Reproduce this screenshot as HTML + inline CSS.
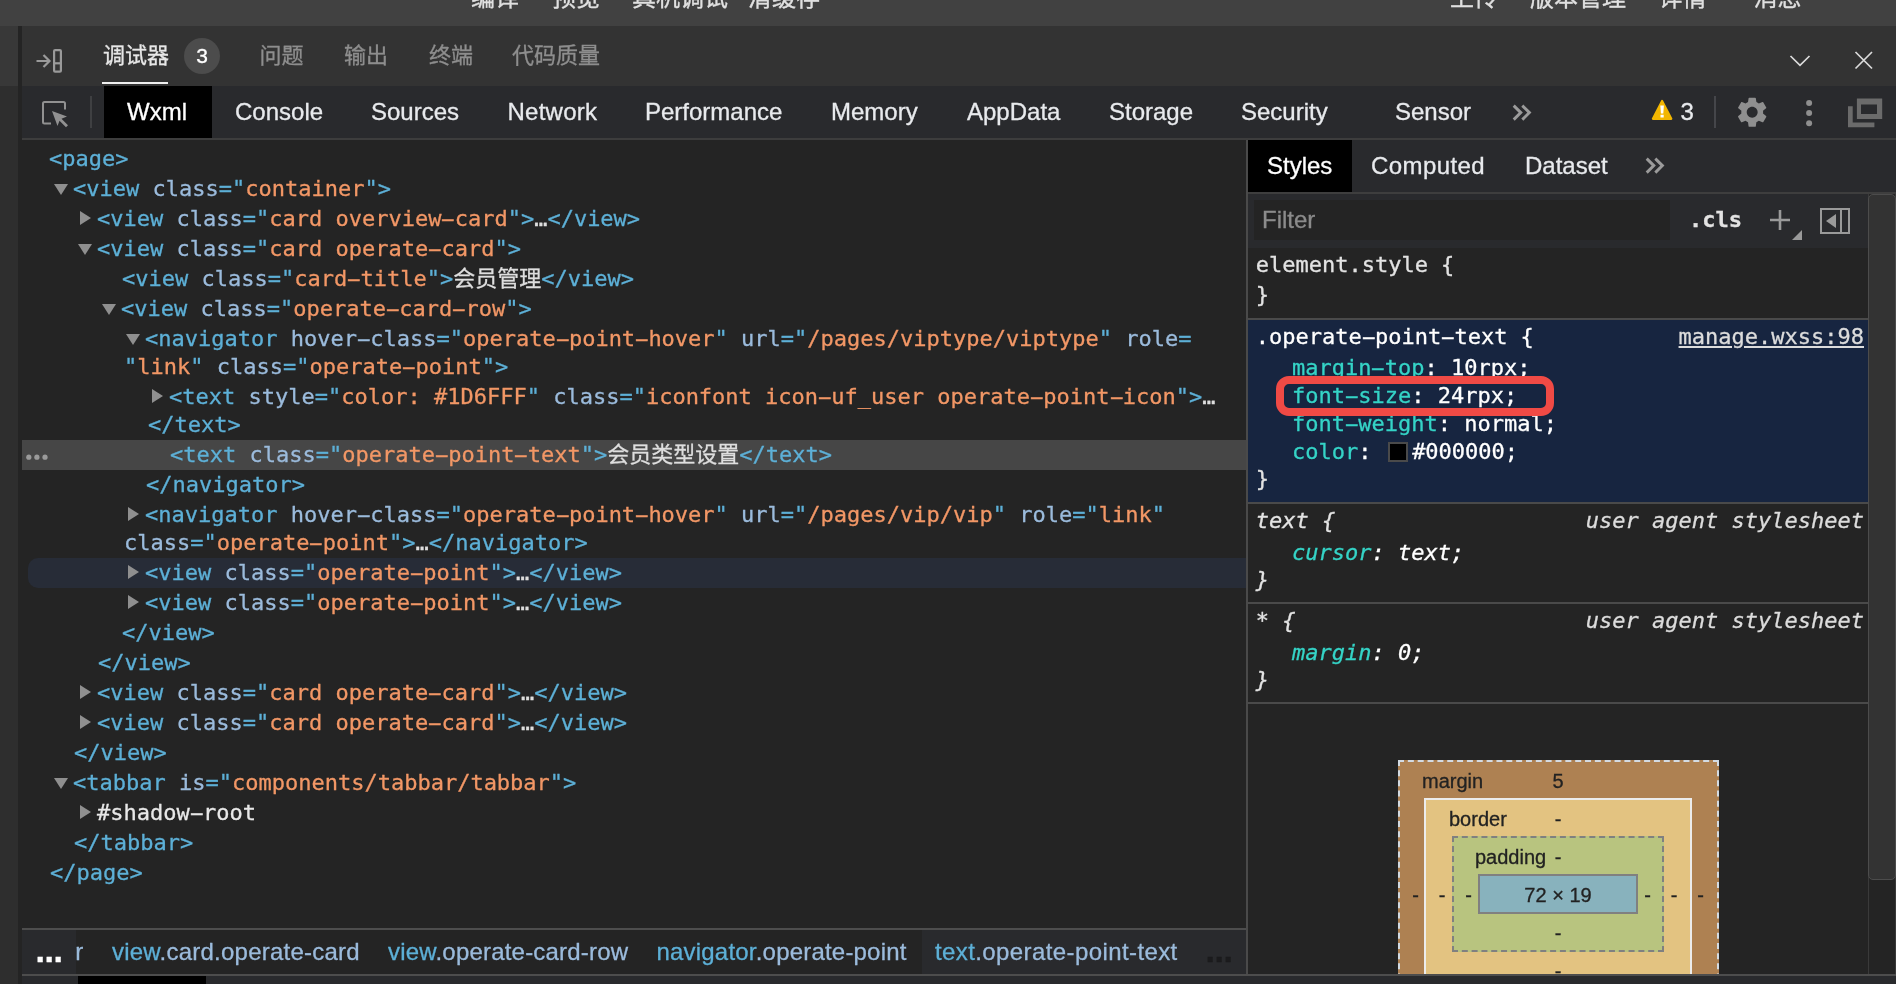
<!DOCTYPE html>
<html lang="zh-CN">
<head>
<meta charset="utf-8">
<title>调试器 - Wxml</title>
<style>
html,body{margin:0;padding:0;}
body{width:1896px;height:984px;overflow:hidden;background:#333333;position:relative;
  font-family:"Liberation Sans","Noto Sans CJK SC",sans-serif;color:#e8eaed;}
#wrap{position:absolute;left:0;top:0;width:1896px;height:984px;overflow:hidden;will-change:transform;-webkit-text-stroke:0.3px;}
.abs{position:absolute;}
/* top app toolbar (clipped) */
#topbar{left:0;top:0;width:1896px;height:26px;background:#414141;overflow:hidden;}
#topbar span{position:absolute;top:-18px;font-size:24px;line-height:32px;color:#e0e0e0;white-space:nowrap;}
/* left strips */
#lstrip1{left:0;top:26px;width:18px;height:60px;background:#383838;}
#lstrip2{left:0;top:86px;width:18px;height:898px;background:#2e2e2e;}
#lstrip3{left:18px;top:26px;width:4px;height:958px;background:#242424;}
/* panel tab row */
#ptabs{left:22px;top:26px;width:1874px;height:60px;background:#333333;}
#ptabs span.t{position:absolute;top:14px;font-size:22px;line-height:32px;color:#8e8e8e;white-space:nowrap;}
#ptabs span.t.on{color:#e7e7e7;}
/* devtools toolbar */
#dtbar{left:22px;top:86px;width:1874px;height:52px;background:#292a2d;}
#dtbar .tab{position:absolute;top:0;height:52px;line-height:51px;font-size:24px;color:#e8eaed;white-space:nowrap;}
#dtline{left:22px;top:138px;width:1874px;height:2px;background:#3d3d3d;}
/* tree */
#tree{left:22px;top:140px;width:1224px;height:790px;background:#242424;overflow:hidden;}
.mono{font-family:"DejaVu Sans Mono","Liberation Mono","Noto Sans CJK SC",monospace;font-size:22px;}
.sr{color:#e8e8e8;}
.h{display:inline-block;font-style:inherit;transform:scaleX(2);}
.ln{position:absolute;left:0;white-space:pre;line-height:28px;height:28px;}
.tg{color:#5db0d7;}
.an{color:#9bbbdc;}
.av{color:#f29766;}
.tx{color:#dedede;}
.ar{position:absolute;width:0;height:0;}

/* breadcrumbs */
#crumbs{left:22px;top:928px;width:1224px;height:46px;background:#242424;border-top:2px solid #4d4d4d;box-sizing:border-box;overflow:hidden;}
#crumbs .c{position:absolute;top:0;height:44px;line-height:43px;font-size:24px;white-space:nowrap;color:#9bbbdc;}
#crumbs .c b{font-weight:normal;color:#5db0d7;}
#botline{left:22px;top:974px;width:1874px;height:2px;background:#4d4d4d;}
#botbar{left:22px;top:976px;width:1874px;height:8px;background:#292a2d;}
/* right pane */
#vdiv{left:1246px;top:140px;width:2px;height:834px;background:#4a4a4a;}
#rtabs{left:1248px;top:140px;width:648px;height:52px;background:#292a2d;}
#rtabs .tab{position:absolute;top:0;height:52px;line-height:51px;font-size:24px;color:#e8eaed;white-space:nowrap;}
#rline{left:1248px;top:192px;width:648px;height:2px;background:#3e3e3e;}
#filter{left:1248px;top:194px;width:620px;height:54px;background:#292a2d;}
#styles{left:1248px;top:248px;width:620px;height:726px;background:#242424;overflow:hidden;}
#styles .sl{position:absolute;white-space:pre;line-height:28px;height:28px;color:#e3e3e3;}
.pn{color:#35d4c7;}
.sep{position:absolute;left:0;width:620px;height:2px;background:#4a4a4a;}
#sbar{left:1868px;top:194px;width:28px;height:780px;background:#242424;box-sizing:border-box;border-left:1px solid #3a3a3a;border-right:1px solid #3a3a3a;}
#sthumb{left:1868px;top:194px;width:28px;height:685.6px;background:#333333;box-sizing:border-box;border:1.5px solid #4c4c4c;border-radius:5px;}
/* box model */
.bm{position:absolute;box-sizing:border-box;}
.bml{position:absolute;font-family:"Liberation Sans",sans-serif;font-size:20px;line-height:24px;color:#222;white-space:nowrap;}
</style>
</head>
<body>
<div id="wrap">
<div id="topbar" class="abs">
  <span style="left:471px">编译</span>
  <span style="left:552px">预览</span>
  <span style="left:632px">真机调试</span>
  <span style="left:748px">清缓存</span>
  <span style="left:1450px">上传</span>
  <span style="left:1530px">版本管理</span>
  <span style="left:1658.5px">详情</span>
  <span style="left:1753.5px">消息</span>
</div>
<div id="lstrip1" class="abs"></div>
<div id="lstrip2" class="abs"></div>
<div id="lstrip3" class="abs"></div>

<div id="ptabs" class="abs">
  <span class="t on" style="left:81px">调试器</span>
  <span class="t" style="left:237.5px">问题</span>
  <span class="t" style="left:322px">输出</span>
  <span class="t" style="left:407px">终端</span>
  <span class="t" style="left:490px">代码质量</span>
  <svg class="abs" style="left:12px;top:20px" width="32" height="30" viewBox="0 0 32 30">
    <path d="M2.5 15 H15 M9.5 9 L15.5 15 L9.5 21" fill="none" stroke="#9a9a9a" stroke-width="2.2"/>
    <rect x="20.1" y="4.1" width="6.8" height="21.6" rx="1" fill="none" stroke="#9a9a9a" stroke-width="2.2"/>
    <path d="M20 17.3 H27" stroke="#9a9a9a" stroke-width="2.2"/>
  </svg>
  <div class="abs" style="left:80px;top:55.5px;width:66px;height:2.5px;background:#f0f0f0"></div>
  <div class="abs" style="left:162px;top:12px;width:36px;height:36px;border-radius:18px;background:#4c4c4c"></div>
  <span class="abs" style="left:162px;top:12px;width:36px;text-align:center;font-size:21px;line-height:36px;color:#fff">3</span>
  <svg class="abs" style="left:1764px;top:26px" width="28" height="18" viewBox="0 0 28 18"><path d="M4.5 4 L14 13.3 L23.5 4" fill="none" stroke="#dcdcdc" stroke-width="1.7"/></svg>
  <svg class="abs" style="left:1830px;top:22px" width="24" height="24" viewBox="0 0 24 24"><path d="M3.5 4 L20 20.5 M20 4 L3.5 20.5" fill="none" stroke="#dcdcdc" stroke-width="1.7"/></svg>
</div>

<div id="dtbar" class="abs">
  <svg class="abs" style="left:19px;top:12.5px" width="30" height="30" viewBox="0 0 30 30">
    <path d="M10 24.5 H3.5 a1.5 1.5 0 0 1 -1.5 -1.5 V4.5 a1.5 1.5 0 0 1 1.5 -1.5 H22.5 a1.5 1.5 0 0 1 1.5 1.5 V10.5" fill="none" stroke="#919191" stroke-width="2"/>
    <path d="M11 12 L26 17.5 L20.5 19.8 L27 26.3 L25 28.3 L18.5 21.8 L16.5 27 Z" fill="#919191"/>
  </svg>
  <div class="abs" style="left:68px;top:10px;width:2px;height:32px;background:#3f4042"></div>
  <div class="abs" style="left:82px;top:0;width:108px;height:52px;background:#000"></div>
  <span class="tab" style="left:105px;color:#fff">Wxml</span>
  <span class="tab" style="left:213px">Console</span>
  <span class="tab" style="left:349px">Sources</span>
  <span class="tab" style="left:485.5px;letter-spacing:0.25px">Network</span>
  <span class="tab" style="left:623px">Performance</span>
  <span class="tab" style="left:809px">Memory</span>
  <span class="tab" style="left:945px">AppData</span>
  <span class="tab" style="left:1087px">Storage</span>
  <span class="tab" style="left:1219px">Security</span>
  <span class="tab" style="left:1373px">Sensor</span>
  <svg class="abs" style="left:1489.6px;top:17.6px" width="20" height="18" viewBox="0 0 20 18"><path d="M1.7 1.6 L8.8 8.6 L1.7 15.6 M10.3 1.6 L17.4 8.6 L10.3 15.6" fill="none" stroke="#9b9b9b" stroke-width="2.9"/></svg>
  <svg class="abs" style="left:1628px;top:12px" width="24" height="24" viewBox="0 0 24 24">
    <path d="M12.1 3 L21.3 20.8 H2.9 Z" fill="#f2b600" stroke="#f2b600" stroke-width="2.2" stroke-linejoin="round"/>
    <path d="M10.3 7.6 H13.9 L13.3 15.4 H10.9 Z M10.5 16.8 H13.7 V19.4 H10.5 Z" fill="#fff"/>
  </svg>
  <span class="tab" style="left:1658.5px">3</span>
  <div class="abs" style="left:1692px;top:10px;width:2px;height:32px;background:#45464a"></div>
  <svg class="abs" style="left:1711.8px;top:7.8px" width="36.4" height="36.4" viewBox="0 0 24 24"><path fill="#8f8f8f" d="M19.14,12.94c0.04-0.3,0.06-0.61,0.06-0.94c0-0.32-0.02-0.64-0.07-0.94l2.03-1.58c0.18-0.14,0.23-0.41,0.12-0.61 l-1.92-3.32c-0.12-0.22-0.37-0.29-0.59-0.22l-2.39,0.96c-0.5-0.38-1.03-0.7-1.62-0.94L14.4,2.81c-0.04-0.24-0.24-0.41-0.48-0.41 h-3.84c-0.24,0-0.43,0.17-0.47,0.41L9.25,5.35C8.66,5.59,8.12,5.92,7.63,6.29L5.24,5.33c-0.22-0.08-0.47,0-0.59,0.22L2.74,8.87 C2.62,9.08,2.66,9.34,2.86,9.48l2.03,1.58C4.84,11.36,4.8,11.69,4.8,12s0.02,0.64,0.07,0.94l-2.03,1.58 c-0.18,0.14-0.23,0.41-0.12,0.61l1.92,3.32c0.12,0.22,0.37,0.29,0.59,0.22l2.39-0.96c0.5,0.38,1.03,0.7,1.62,0.94l0.36,2.54 c0.05,0.24,0.24,0.41,0.48,0.41h3.84c0.24,0,0.44-0.17,0.47-0.41l0.36-2.54c0.59-0.24,1.13-0.56,1.62-0.94l2.39,0.96 c0.22,0.08,0.47,0,0.59-0.22l1.92-3.32c0.12-0.22,0.07-0.47-0.12-0.61L19.14,12.94z M12,15.6c-1.98,0-3.6-1.62-3.6-3.6 s1.62-3.6,3.6-3.6s3.6,1.62,3.6,3.6S13.98,15.6,12,15.6z"/></svg>
  <svg class="abs" style="left:1782px;top:12px" width="10" height="30" viewBox="0 0 10 30"><circle cx="5.1" cy="5" r="3" fill="#8f8f8f"/><circle cx="5.1" cy="15" r="3" fill="#8f8f8f"/><circle cx="5.1" cy="25.2" r="3" fill="#8f8f8f"/></svg>
  <svg class="abs" style="left:1824px;top:10px" width="40" height="34" viewBox="0 0 40 34">
    <path d="M2 10.2 H6.7 V26.6 H28.4 V31.3 H2 Z" fill="#6b6b6b"/>
    <path d="M10.9 2.5 H36.2 V23 H10.9 Z M15 8.4 V18 H31 V8.4 Z" fill="#6b6b6b" fill-rule="evenodd"/>
  </svg>
</div>
<div id="dtline" class="abs"></div>
<div id="tree" class="abs mono">
<div class="abs" style="left:0;top:300px;width:1224px;height:30px;background:#464646"></div>
<div class="abs" style="left:6px;top:418px;width:1218px;height:30px;background:#272c37;border-radius:10px 0 0 10px"></div>
<svg class="abs" style="left:3px;top:312px" width="24" height="10" viewBox="0 0 24 10"><circle cx="3.8" cy="5.2" r="2.6" fill="#9a9a9a"/><circle cx="11.9" cy="5.2" r="2.6" fill="#9a9a9a"/><circle cx="20" cy="5.2" r="2.6" fill="#9a9a9a"/></svg>
<div class="ln" style="left:27px;top:5px"><span class="tg">&lt;page&gt;</span></div>
<i class="ar" style="left:31.5px;top:44.0px;border-left:7.4px solid transparent;border-right:7.4px solid transparent;border-top:11px solid #8f8f8f"></i>
<div class="ln" style="left:51px;top:35px"><span class="tg">&lt;view</span> <span class="an">class</span><span class="tg">="</span><span class="av">container</span><span class="tg">"</span><span class="tg">&gt;</span></div>
<i class="ar" style="left:58.0px;top:70.7px;border-top:7.3px solid transparent;border-bottom:7.3px solid transparent;border-left:11px solid #8f8f8f"></i>
<div class="ln" style="left:75px;top:65px"><span class="tg">&lt;view</span> <span class="an">class</span><span class="tg">="</span><span class="av">card overview<i class="h">-</i>card</span><span class="tg">"</span><span class="tg">&gt;</span><span class="tx">…</span><span class="tg">&lt;/view&gt;</span></div>
<i class="ar" style="left:55.5px;top:104.0px;border-left:7.4px solid transparent;border-right:7.4px solid transparent;border-top:11px solid #8f8f8f"></i>
<div class="ln" style="left:75px;top:95px"><span class="tg">&lt;view</span> <span class="an">class</span><span class="tg">="</span><span class="av">card operate<i class="h">-</i>card</span><span class="tg">"</span><span class="tg">&gt;</span></div>
<div class="ln" style="left:100px;top:125px"><span class="tg">&lt;view</span> <span class="an">class</span><span class="tg">="</span><span class="av">card<i class="h">-</i>title</span><span class="tg">"</span><span class="tg">&gt;</span><span class="tx">会员管理</span><span class="tg">&lt;/view&gt;</span></div>
<i class="ar" style="left:79.5px;top:164.0px;border-left:7.4px solid transparent;border-right:7.4px solid transparent;border-top:11px solid #8f8f8f"></i>
<div class="ln" style="left:99px;top:155px"><span class="tg">&lt;view</span> <span class="an">class</span><span class="tg">="</span><span class="av">operate<i class="h">-</i>card<i class="h">-</i>row</span><span class="tg">"</span><span class="tg">&gt;</span></div>
<i class="ar" style="left:103.5px;top:194.0px;border-left:7.4px solid transparent;border-right:7.4px solid transparent;border-top:11px solid #8f8f8f"></i>
<div class="ln" style="left:123px;top:185px"><span class="tg">&lt;navigator</span> <span class="an">hover<i class="h">-</i>class</span><span class="tg">="</span><span class="av">operate<i class="h">-</i>point<i class="h">-</i>hover</span><span class="tg">"</span> <span class="an">url</span><span class="tg">="</span><span class="av">/pages/viptype/viptype</span><span class="tg">"</span> <span class="an">role</span><span class="tg">=</span></div>
<div class="ln" style="left:102px;top:213px"><span class="tg">"</span><span class="av">link</span><span class="tg">"</span> <span class="an">class</span><span class="tg">="</span><span class="av">operate<i class="h">-</i>point</span><span class="tg">"</span><span class="tg">&gt;</span></div>
<i class="ar" style="left:130.0px;top:248.7px;border-top:7.3px solid transparent;border-bottom:7.3px solid transparent;border-left:11px solid #8f8f8f"></i>
<div class="ln" style="left:147px;top:243px"><span class="tg">&lt;text</span> <span class="an">style</span><span class="tg">="</span><span class="av">color: #1D6FFF</span><span class="tg">"</span> <span class="an">class</span><span class="tg">="</span><span class="av">iconfont icon<i class="h">-</i>uf_user operate<i class="h">-</i>point<i class="h">-</i>icon</span><span class="tg">"</span><span class="tg">&gt;</span><span class="tx">…</span></div>
<div class="ln" style="left:126px;top:271px"><span class="tg">&lt;/text&gt;</span></div>
<div class="ln" style="left:148px;top:301px"><span class="tg">&lt;text</span> <span class="an">class</span><span class="tg">="</span><span class="av">operate<i class="h">-</i>point<i class="h">-</i>text</span><span class="tg">"</span><span class="tg">&gt;</span><span class="tx">会员类型设置</span><span class="tg">&lt;/text&gt;</span></div>
<div class="ln" style="left:124px;top:331px"><span class="tg">&lt;/navigator&gt;</span></div>
<i class="ar" style="left:106.0px;top:366.7px;border-top:7.3px solid transparent;border-bottom:7.3px solid transparent;border-left:11px solid #8f8f8f"></i>
<div class="ln" style="left:123px;top:361px"><span class="tg">&lt;navigator</span> <span class="an">hover<i class="h">-</i>class</span><span class="tg">="</span><span class="av">operate<i class="h">-</i>point<i class="h">-</i>hover</span><span class="tg">"</span> <span class="an">url</span><span class="tg">="</span><span class="av">/pages/vip/vip</span><span class="tg">"</span> <span class="an">role</span><span class="tg">="</span><span class="av">link</span><span class="tg">"</span></div>
<div class="ln" style="left:102px;top:389px"><span class="an">class</span><span class="tg">="</span><span class="av">operate<i class="h">-</i>point</span><span class="tg">"</span><span class="tg">&gt;</span><span class="tx">…</span><span class="tg">&lt;/navigator&gt;</span></div>
<i class="ar" style="left:106.0px;top:424.7px;border-top:7.3px solid transparent;border-bottom:7.3px solid transparent;border-left:11px solid #8f8f8f"></i>
<div class="ln" style="left:123px;top:419px"><span class="tg">&lt;view</span> <span class="an">class</span><span class="tg">="</span><span class="av">operate<i class="h">-</i>point</span><span class="tg">"</span><span class="tg">&gt;</span><span class="tx">…</span><span class="tg">&lt;/view&gt;</span></div>
<i class="ar" style="left:106.0px;top:454.7px;border-top:7.3px solid transparent;border-bottom:7.3px solid transparent;border-left:11px solid #8f8f8f"></i>
<div class="ln" style="left:123px;top:449px"><span class="tg">&lt;view</span> <span class="an">class</span><span class="tg">="</span><span class="av">operate<i class="h">-</i>point</span><span class="tg">"</span><span class="tg">&gt;</span><span class="tx">…</span><span class="tg">&lt;/view&gt;</span></div>
<div class="ln" style="left:100px;top:479px"><span class="tg">&lt;/view&gt;</span></div>
<div class="ln" style="left:76px;top:509px"><span class="tg">&lt;/view&gt;</span></div>
<i class="ar" style="left:58.0px;top:544.7px;border-top:7.3px solid transparent;border-bottom:7.3px solid transparent;border-left:11px solid #8f8f8f"></i>
<div class="ln" style="left:75px;top:539px"><span class="tg">&lt;view</span> <span class="an">class</span><span class="tg">="</span><span class="av">card operate<i class="h">-</i>card</span><span class="tg">"</span><span class="tg">&gt;</span><span class="tx">…</span><span class="tg">&lt;/view&gt;</span></div>
<i class="ar" style="left:58.0px;top:574.7px;border-top:7.3px solid transparent;border-bottom:7.3px solid transparent;border-left:11px solid #8f8f8f"></i>
<div class="ln" style="left:75px;top:569px"><span class="tg">&lt;view</span> <span class="an">class</span><span class="tg">="</span><span class="av">card operate<i class="h">-</i>card</span><span class="tg">"</span><span class="tg">&gt;</span><span class="tx">…</span><span class="tg">&lt;/view&gt;</span></div>
<div class="ln" style="left:52px;top:599px"><span class="tg">&lt;/view&gt;</span></div>
<i class="ar" style="left:31.5px;top:638.0px;border-left:7.4px solid transparent;border-right:7.4px solid transparent;border-top:11px solid #8f8f8f"></i>
<div class="ln" style="left:51px;top:629px"><span class="tg">&lt;tabbar</span> <span class="an">is</span><span class="tg">="</span><span class="av">components/tabbar/tabbar</span><span class="tg">"</span><span class="tg">&gt;</span></div>
<i class="ar" style="left:58.0px;top:664.7px;border-top:7.3px solid transparent;border-bottom:7.3px solid transparent;border-left:11px solid #8f8f8f"></i>
<div class="ln" style="left:75px;top:659px"><span class="sr">#shadow<i class="h">-</i>root</span></div>
<div class="ln" style="left:52px;top:689px"><span class="tg">&lt;/tabbar&gt;</span></div>
<div class="ln" style="left:28px;top:719px"><span class="tg">&lt;/page&gt;</span></div>
</div><!--/tree-->

<div id="crumbs" class="abs">
  <div class="abs" style="left:0;top:0;width:54px;height:44px;background:#292a2d"></div>
  <span class="abs" style="left:13.5px;top:-2px;font-size:34px;line-height:44px;font-weight:bold;color:#fff;letter-spacing:-0.45px">...</span>
  <div class="abs" style="left:54px;top:0;width:1170px;height:44px;overflow:hidden">
    <span class="c" style="left:-27.5px">bar</span>
    <span class="c" style="left:36px;letter-spacing:0.23px"><b>view</b>.card.operate-card</span>
    <span class="c" style="left:312px;letter-spacing:0.2px"><b>view</b>.operate-card-row</span>
    <span class="c" style="left:580.5px;letter-spacing:0.2px"><b>navigator</b>.operate-point</span>
    <div class="abs" style="left:846px;top:0;width:324px;height:44px;background:#292a2d"></div>
    <span class="c" style="left:859px;letter-spacing:0.4px"><b>text</b>.operate-point-text</span>
    <span class="abs" style="left:1129.5px;top:-2px;font-size:34px;line-height:44px;font-weight:bold;color:#1b1b1d;letter-spacing:-0.45px">...</span>
  </div>
</div>
<div id="botline" class="abs"></div>
<div id="botbar" class="abs"><div class="abs" style="left:56px;top:0;width:128px;height:8px;background:#000"></div></div>

<div id="vdiv" class="abs"></div>
<div id="rtabs" class="abs">
  <div class="abs" style="left:0;top:0;width:104px;height:52px;background:#000"></div>
  <span class="tab" style="left:19px;color:#fff">Styles</span>
  <span class="tab" style="left:123px;letter-spacing:0.42px">Computed</span>
  <span class="tab" style="left:277px">Dataset</span>
  <svg class="abs" style="left:397.2px;top:17.4px" width="20" height="18" viewBox="0 0 20 18"><path d="M1.7 1.6 L8.8 8.6 L1.7 15.6 M10.3 1.6 L17.4 8.6 L10.3 15.6" fill="none" stroke="#9b9b9b" stroke-width="2.9"/></svg>
</div>
<div id="rline" class="abs"></div>
<div id="filter" class="abs">
  <div class="abs" style="left:6px;top:6px;width:416px;height:40px;background:#242424"></div>
  <span class="abs" style="left:14px;top:11px;font-size:24px;line-height:30px;color:#8b8b8b">Filter</span>
  <span class="abs mono" style="left:441px;top:12px;font-weight:bold;line-height:28px;color:#e3e3e3">.cls</span>
  <svg class="abs" style="left:518px;top:12px" width="40" height="36" viewBox="0 0 40 36">
    <path d="M14 4 V24 M4 14 H24" stroke="#9a9a9a" stroke-width="2.6" fill="none"/>
    <path d="M36 24 V34 H26 Z" fill="#9a9a9a"/>
  </svg>
  <svg class="abs" style="left:570px;top:12px" width="36" height="30" viewBox="0 0 36 30">
    <rect x="3" y="3" width="28" height="24" fill="none" stroke="#9a9a9a" stroke-width="2"/>
    <path d="M23 3 V27" stroke="#9a9a9a" stroke-width="2"/>
    <path d="M18 8 V22 L8 15 Z" fill="#9a9a9a"/>
  </svg>
</div>
<div id="styles" class="abs mono">
<div class="abs" style="left:0;top:72px;width:620px;height:182px;background:#172540"></div>
<div class="sep" style="top:70px"></div>
<div class="sep" style="top:254px"></div>
<div class="sep" style="top:354px"></div>
<div class="sep" style="top:454px"></div>
<div class="sl" style="left:7.7px;top:3.1px;">element.style {</div>
<div class="sl" style="left:7.7px;top:32.7px;">}</div>
<div class="sl" style="left:7.7px;top:74.6px;color:#fff">.operate<i class="h">-</i>point<i class="h">-</i>text {</div>
<div class="sl" style="left:44.0px;top:106.4px;color:#fff"><span class="pn">margin<i class="h">-</i>top</span>: 10rpx;</div>
<div class="sl" style="left:44.0px;top:134.4px;color:#fff"><span class="pn">font<i class="h">-</i>size</span>: 24rpx;</div>
<div class="sl" style="left:44.0px;top:162.4px;color:#fff"><span class="pn">font<i class="h">-</i>weight</span>: normal;</div>
<div class="sl" style="left:44.0px;top:190.4px;color:#fff"><span class="pn">color</span>: <span style="display:inline-block;width:20px;height:20px;box-sizing:border-box;border:2px solid #4a4a4a;background:#000;vertical-align:-3px;margin-left:3.4px;margin-right:4px"></span>#000000;</div>
<div class="sl" style="left:7.7px;top:217.2px;">}</div>
<div class="sl" style="left:7.7px;top:258.7px;font-style:italic">text {</div>
<div class="sl" style="left:44.0px;top:290.7px;font-style:italic;color:#fff"><span class="pn">cursor</span>: text;</div>
<div class="sl" style="left:7.7px;top:318.4px;font-style:italic">}</div>
<div class="sl" style="left:7.7px;top:358.7px;font-style:italic">* {</div>
<div class="sl" style="left:44.0px;top:390.7px;font-style:italic;color:#fff"><span class="pn">margin</span>: 0;</div>
<div class="sl" style="left:7.7px;top:418.4px;font-style:italic">}</div>
<div class="sl" style="right:4px;top:74.6px;color:#dcdcdc;text-decoration:underline">manage.wxss:98</div>
<div class="sl" style="right:4px;top:258.7px;color:#dcdcdc;font-style:italic">user agent stylesheet</div>
<div class="sl" style="right:4px;top:358.7px;color:#dcdcdc;font-style:italic">user agent stylesheet</div>
<div class="abs" style="left:28px;top:128px;width:278px;height:40px;box-sizing:border-box;border:8px solid #f04a45;border-radius:13px"></div>
<div class="bm" style="left:150.0px;top:512.0px;width:320.5px;height:250.0px;background:#ae8152;border:2px dashed #d3dbe3"></div>
<div class="bm" style="left:176.0px;top:550.0px;width:268.0px;height:192.0px;background:#e3c381;border:2px solid #ececec"></div>
<div class="bm" style="left:204.0px;top:588.0px;width:212.0px;height:116.0px;background:#b8c47f;border:2px dashed #808080"></div>
<div class="bm" style="left:230.0px;top:626.0px;width:160.0px;height:40.0px;background:#88b2bd;border:2px solid #808080"></div>
<span class="bml" style="left:174.0px;top:521.0px">margin</span>
<span class="bml" style="left:310.0px;top:521.0px;transform:translateX(-50%)">5</span>
<span class="bml" style="left:201.0px;top:559.0px">border</span>
<span class="bml" style="left:310.0px;top:559.0px;transform:translateX(-50%)">-</span>
<span class="bml" style="left:227.0px;top:597.0px">padding</span>
<span class="bml" style="left:310.0px;top:597.0px;transform:translateX(-50%)">-</span>
<span class="bml" style="left:310.0px;top:634.5px;transform:translateX(-50%)">72 × 19</span>
<span class="bml" style="left:167.6px;top:635.0px;transform:translateX(-50%)">-</span>
<span class="bml" style="left:194.0px;top:635.0px;transform:translateX(-50%)">-</span>
<span class="bml" style="left:220.7px;top:635.0px;transform:translateX(-50%)">-</span>
<span class="bml" style="left:399.5px;top:635.0px;transform:translateX(-50%)">-</span>
<span class="bml" style="left:426.0px;top:635.0px;transform:translateX(-50%)">-</span>
<span class="bml" style="left:452.5px;top:635.0px;transform:translateX(-50%)">-</span>
<span class="bml" style="left:310.0px;top:673.0px;transform:translateX(-50%)">-</span>
<span class="bml" style="left:310.0px;top:711.0px;transform:translateX(-50%)">-</span>
</div><!--/styles-->
<div id="sbar" class="abs"></div>
<div id="sthumb" class="abs"></div>
</div><!--/wrap-->
</body>
</html>
